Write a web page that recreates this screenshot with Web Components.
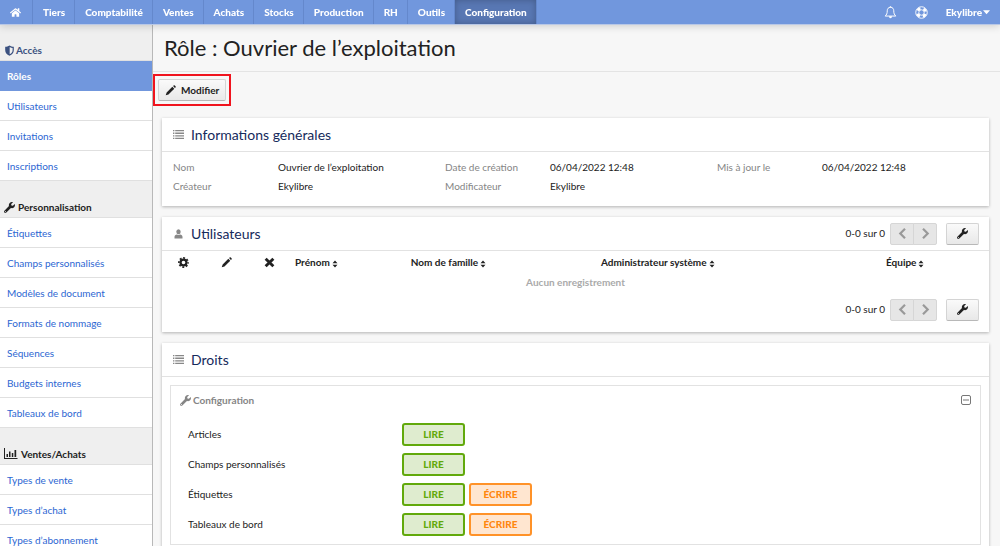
<!DOCTYPE html>
<html lang="fr">
<head>
<meta charset="utf-8">
<meta name="viewport" content="width=device-width, initial-scale=1">
<title>Rôle : Ouvrier de l’exploitation</title>
<style>
    body {
        margin: 0;
        font-family: Lato, "Open Sans", sans-serif;
        font-size: 10px;
        line-height: 19px;
        color: #222;
        background: #f7f7f7;
    }
</style>
</head>
<body>
<ek-app></ek-app>

<script>
const ICONS = {
    home: ['0 0 576 512', '<path d="M280.37 148.26L96 300.11V464a16 16 0 0 0 16 16l112.06-.29a16 16 0 0 0 15.92-16V368a16 16 0 0 1 16-16h64a16 16 0 0 1 16 16v95.64a16 16 0 0 0 16 16.05L464 480a16 16 0 0 0 16-16V300L295.67 148.26a12.19 12.19 0 0 0-15.3 0zM571.6 251.47L488 182.56V44.05a12 12 0 0 0-12-12h-56a12 12 0 0 0-12 12v72.61L318.47 43a48 48 0 0 0-61 0L4.34 251.47a12 12 0 0 0-1.6 16.9l25.5 31A12 12 0 0 0 45.15 301l235.22-193.74a12.19 12.19 0 0 1 15.3 0L530.9 301a12 12 0 0 0 16.9-1.6l25.5-31a12 12 0 0 0-1.7-16.93z"/>'],
    wrench: ['0 0 512 512', '<path d="M507.73 109.1c-2.24-9.03-13.54-12.09-20.12-5.51l-74.36 74.36-67.88-11.31-11.31-67.88 74.36-74.36c6.62-6.62 3.43-17.9-5.66-20.16-47.38-11.74-99.55.91-136.58 37.93-39.64 39.64-50.55 97.1-34.05 147.2L18.74 402.76c-24.99 24.99-24.99 65.51 0 90.5 24.99 24.99 65.51 24.99 90.5 0l213.21-213.21c50.12 16.71 107.47 5.68 147.37-34.22 37.07-37.07 49.7-89.32 37.91-136.73zM64 472c-13.25 0-24-10.75-24-24 0-13.26 10.75-24 24-24s24 10.74 24 24c0 13.25-10.75 24-24 24z"/>'],
    pencil: ['0 0 12 12', '<path d="M8 1.900l2.100 2.100-6.300 6.300-3 1 1-3zM8.800 1.200l.6-.6q.7-.6 1.300 0l.8.8q.5.6 0 1.200l-.7.7z"/>'],
    bell: ['0 0 12 12', '<path d="M6 1.200c-2 0-3 1.400-3 3.200 0 2.600-.6 3.600-1.900 4.900h9.800C9.600 8 9 7 9 4.400 9 2.600 8 1.200 6 1.200z" fill="none" stroke="currentColor" stroke-width=".9" stroke-linejoin="round"/><path d="M5.400 .3h1.200v1H5.400zM4.600 9.500h2.800a1.400 1.700 0 0 1-2.800 0z"/>'],
    ring: ['0 0 14 14', '<g fill="none" stroke="currentColor"><circle cx="7" cy="7" r="6.200"/><circle cx="7" cy="7" r="2.900"/><circle cx="7" cy="7" r="4.500" stroke-width="2.800" stroke-dasharray="3.600 3.470" stroke-dashoffset="-1.700"/></g>'],
    caret: ['0 0 8 5', '<path d="M0 0h8L4 4.500z"/>'],
    shield: ['0 0 12 12', '<path fill-rule="evenodd" d="M6 .5c1.500 1 3 1.400 4.700 1.400v3.600c0 3-1.700 4.900-4.700 6.200-3-1.300-4.700-3.200-4.700-6.200V1.900C3 1.900 4.500 1.500 6 .5zm.2 1.700v7.900c2.100-1 3.200-2.400 3.200-4.600V3.200C8.200 3.100 7.200 2.800 6.200 2.200z"/>'],
    chart: ['0 0 14 12', '<path d="M0 0h1v10h12.500v1H0zM2.500 6h1.500v3H2.500zM5 3.500h1.500V9H5zM7.800 5h1.500v4H7.800zM10.500 2h1.700v7h-1.700z"/>'],
    list: ['0 0 11 10', '<path d="M0 0h1.400v1.300H0zM0 2.600h1.400v1.300H0zM0 5.200h1.400v1.300H0zM0 7.800h1.400v1.300H0zM2.200 0H11v1.300H2.200zM2.200 2.600H11v1.300H2.200zM2.200 5.200H11v1.300H2.200zM2.200 7.800H11v1.300H2.200z"/>'],
    user: ['0 0 10 10', '<ellipse cx="5" cy="2.700" rx="2.200" ry="2.500"/><path d="M1 9.500V8c0-1.600 1-2.500 2.500-2.500.9.600 2.100.6 3 0C8 5.500 9 6.400 9 8v1.500z"/>'],
    gear: ['0 0 12 12', '<circle cx="6" cy="6" r="3.200" fill="none" stroke="currentColor" stroke-width="2.400"/><circle cx="6" cy="6" r="5" fill="none" stroke="currentColor" stroke-width="1.800" stroke-dasharray="2.100 1.827" stroke-dashoffset="1"/>'],
    times: ['0 0 10 10', '<path d="M1.500 1.500l7 7M8.500 1.500l-7 7" stroke="currentColor" stroke-width="2.600"/>'],
    prev: ['0 0 11 11', '<path d="M8 .8L3.300 5.500 8 10.200" fill="none" stroke="currentColor" stroke-width="2.200"/>'],
    next: ['0 0 11 11', '<path d="M3 .8l4.700 4.700L3 10.200" fill="none" stroke="currentColor" stroke-width="2.200"/>'],
    sort: ['0 0 6 8', '<path d="M0.500 3.300L3 .4l2.500 2.900zM.5 4.700h5L3 7.600z"/>'],
    minus: ['0 0 11 11', '<rect x=".5" y=".5" width="9" height="9" rx="1.500" fill="none" stroke="currentColor"/><path d="M2 4.500h6v1H2z"/>']
};

class EkIcon extends HTMLElement {
    connectedCallback() {
        const [box, shape] = ICONS[this.getAttribute('name')];
        this.attachShadow({ mode: 'open' });
        this.shadowRoot.innerHTML = `
            <style>
                :host { display: inline-flex; flex: none; width: 11px; height: 11px; }
                svg { width: 100%; height: 100%; fill: currentColor; }
            </style>
            <svg viewBox="${box}" aria-hidden="true">${shape}</svg>
        `;
    }
}

class EkNavbar extends HTMLElement {
    connectedCallback() {
        const items = ['Tiers', 'Comptabilité', 'Ventes', 'Achats', 'Stocks', 'Production', 'RH', 'Outils', 'Configuration'];
        this.attachShadow({ mode: 'open' });
        this.shadowRoot.innerHTML = `
            <style>
                :host {
                    display: flex;
                    justify-content: space-between;
                    height: 24px;
                    position: relative;
                    z-index: 2;
                    background: #7197dd;
                    border-bottom: 1px solid #b9c8e6;
                    box-shadow: 0 1px 8px rgba(0, 0, 0, 0.18);
                    font-weight: 900;
                }
                nav, .tools { display: flex; }
                a {
                    display: flex;
                    align-items: center;
                    box-sizing: border-box;
                    padding: 0 9px 0 10px;
                    color: white;
                    text-decoration: none;
                    border-right: 1px solid #6488cc;
                }
                a.home { padding: 0 11px 0 10px; }
                a.active {
                    background: #5877b3;
                    box-shadow: inset 0 0 6px rgba(0, 0, 0, 0.25);
                }
                .tools { align-items: center; gap: 18px; padding-right: 10px; }
                .tools a { padding: 0; border: 0; gap: 1px; }
                .tools ek-icon { width: 13px; height: 13px; }
                .tools .caret { width: 7px; height: 5px; }
            </style>
            <nav>
                <a href="#" class="home" aria-label="Accueil"><ek-icon name="home"></ek-icon></a>
                ${items.map(i => `<a href="#" class="${i === 'Configuration' ? 'active' : ''}">${i}</a>`).join('')}
            </nav>
            <div class="tools">
                <a href="#" aria-label="Notifications"><ek-icon name="bell"></ek-icon></a>
                <a href="#" aria-label="Aide"><ek-icon name="ring"></ek-icon></a>
                <a href="#">Ekylibre<ek-icon class="caret" name="caret"></ek-icon></a>
            </div>
        `;
    }
}

class EkSideGroup extends HTMLElement {
    connectedCallback() {
        this.attachShadow({ mode: 'open' });
        this.shadowRoot.innerHTML = `
            <style>
                :host { display: block; }
                h2 {
                    display: flex;
                    align-items: center;
                    gap: 3px;
                    box-sizing: border-box;
                    height: 37px;
                    margin: 0;
                    padding: 16px 4px 0;
                    font-size: 10px;
                    background: #efefef;
                    border-bottom: 1px solid #e0e0e0;
                }
                :host([current]) h2 { height: 36px; color: #3b5180; gap: 1px; }
                ::slotted(a) {
                    display: block;
                    box-sizing: border-box;
                    height: 30px;
                    padding: 6px 7px 4px;
                    color: #2b66d2;
                    background: white;
                    border-bottom: 1px solid #e0e0e0;
                    text-decoration: none;
                }
                ::slotted(a.active) {
                    color: white;
                    font-weight: bold;
                    background: #7197dd;
                    border-color: #7197dd;
                }
                .chart { width: 14px; height: 12px; }
            </style>
            <h2><ek-icon class="${this.getAttribute('icon')}" name="${this.getAttribute('icon')}"></ek-icon>${this.getAttribute('label')}</h2>
            <slot></slot>
        `;
    }
}

class EkPanel extends HTMLElement {
    connectedCallback() {
        this.attachShadow({ mode: 'open' });
        this.shadowRoot.innerHTML = `
            <style>
                :host {
                    display: block;
                    background: white;
                    box-shadow: 0 1px 3px rgba(0, 0, 0, 0.28);
                }
                header {
                    display: flex;
                    align-items: center;
                    min-height: 33px;
                    padding: 0 10px 0 11px;
                    border-bottom: 1px solid #e2e2e2;
                }
                header ek-icon { color: #888; margin-right: 7px; height: 10px; }
                h2 {
                    flex: 1;
                    margin: 0;
                    font-size: 14px;
                    font-weight: normal;
                    color: #152a5c;
                }
            </style>
            <header>
                <ek-icon name="${this.getAttribute('icon')}"></ek-icon>
                <h2>${this.getAttribute('label')}</h2>
                <slot name="tools"></slot>
            </header>
            <slot></slot>
        `;
    }
}

class EkPager extends HTMLElement {
    connectedCallback() {
        this.attachShadow({ mode: 'open' });
        this.shadowRoot.innerHTML = `
            <style>
                :host { display: flex; align-items: center; justify-content: flex-end; height: 33px; }
                .group { display: flex; margin: 0 9px 0 5px; }
                button {
                    display: flex;
                    align-items: center;
                    justify-content: center;
                    box-sizing: border-box;
                    width: 33px;
                    height: 22px;
                    padding: 0;
                    color: #222;
                    background: linear-gradient(#fafafa, #e8e8e8);
                    border: 1px solid #d4d4d4;
                    border-bottom-color: #b8b8b8;
                    border-radius: 2px;
                }
                .group button {
                    width: 24px;
                    color: #999;
                    background: #e6e6e6;
                    border-color: #d6d6d6;
                }
                .group button:first-child { border-radius: 2px 0 0 2px; }
                .group button:last-child { margin-left: -1px; border-radius: 0 2px 2px 0; }
            </style>
            <span>0-0 sur 0</span>
            <div class="group">
                <button type="button" disabled aria-label="Précédent"><ek-icon name="prev"></ek-icon></button>
                <button type="button" disabled aria-label="Suivant"><ek-icon name="next"></ek-icon></button>
            </div>
            <button type="button" aria-label="Options"><ek-icon name="wrench"></ek-icon></button>
        `;
    }
}

class EkInfos extends HTMLElement {
    connectedCallback() {
        const infos = [
            ['Nom', 'Ouvrier de l’exploitation'],
            ['Date de création', '06/04/2022 12:48'],
            ['Mis à jour le', '06/04/2022 12:48'],
            ['Créateur', 'Ekylibre'],
            ['Modificateur', 'Ekylibre']
        ];
        this.attachShadow({ mode: 'open' });
        this.shadowRoot.innerHTML = `
            <style>
                :host { display: block; padding: 6px 0 10px 11px; }
                dl { display: grid; grid-template-columns: repeat(3, 1fr); margin: 0; }
                div { display: flex; }
                dt { width: 105px; color: #858585; }
                dd { margin: 0; }
            </style>
            <dl>${infos.map(([k, v]) => `<div><dt>${k}</dt><dd>${v}</dd></div>`).join('')}</dl>
        `;
    }
}

class EkUserList extends HTMLElement {
    connectedCallback() {
        const columns = ['Prénom', 'Nom de famille', 'Administrateur système', 'Équipe'];
        this.attachShadow({ mode: 'open' });
        this.shadowRoot.innerHTML = `
            <style>
                :host { display: block; padding-bottom: 6px; }
                table { width: 100%; table-layout: fixed; border-collapse: collapse; }
                th { height: 21px; padding: 0 4px; text-align: left; line-height: 14px; }
                th.act { padding: 0; text-align: center; }
                th.act ek-icon { vertical-align: middle; }
                th ek-icon.sort { width: 6px; height: 8px; margin-left: 2px; vertical-align: -2px; }
                .act { width: 43px; }
                .c0 { width: 14%; }
                .c1 { width: 23%; }
                .c3 { width: 107px; }
                td { height: 21px; padding: 0; text-align: center; font-weight: bold; color: #aaa; }
                ek-pager { padding-right: 10px; }
            </style>
            <table>
                <colgroup><col class="act"><col class="act"><col class="act"><col class="c0"><col class="c1"><col><col class="c3"></colgroup>
                <thead>
                    <tr>
                        <th class="act"><ek-icon name="gear"></ek-icon></th>
                        <th class="act"><ek-icon name="pencil"></ek-icon></th>
                        <th class="act"><ek-icon name="times"></ek-icon></th>
                        ${columns.map(c => `<th>${c}<ek-icon class="sort" name="sort"></ek-icon></th>`).join('')}
                    </tr>
                </thead>
                <tbody><tr><td colspan="7">Aucun enregistrement</td></tr></tbody>
            </table>
            <ek-pager></ek-pager>
        `;
    }
}

class EkRights extends HTMLElement {
    connectedCallback() {
        const rights = [
            ['Articles', false],
            ['Champs personnalisés', false],
            ['Étiquettes', true],
            ['Tableaux de bord', true]
        ];
        this.attachShadow({ mode: 'open' });
        this.shadowRoot.innerHTML = `
            <style>
                :host { display: block; padding: 8px 8px 20px; }
                section { border: 1px solid #e2e2e2; padding-bottom: 5px; }
                header {
                    display: flex;
                    align-items: center;
                    justify-content: space-between;
                    height: 28px;
                    padding: 0 8px 0 9px;
                    color: #858585;
                }
                h3 { display: flex; align-items: center; gap: 2px; margin: 0; font-size: 10px; }
                header button { display: flex; padding: 0; border: 0; color: #777; background: none; }
                ul { margin: 0; padding: 5px 0 0 17px; list-style: none; }
                li { display: flex; align-items: center; height: 30px; gap: 4px; }
                li span { width: 210px; }
                li button {
                    box-sizing: border-box;
                    width: 63px;
                    height: 23px;
                    padding: 0;
                    font: 900 10px/19px Lato, sans-serif;
                    color: #62a90c;
                    background: #dfeccf;
                    border: 2px solid #62a90c;
                    border-radius: 3px;
                }
                li button.write { color: #ff870f; background: #ffe6d0; border-color: #ff9228; }
            </style>
            <section>
                <header>
                    <h3><ek-icon name="wrench"></ek-icon>Configuration</h3>
                    <button type="button" aria-label="Replier"><ek-icon name="minus"></ek-icon></button>
                </header>
                <ul>
                    ${rights.map(([name, write]) => `
                        <li><span>${name}</span><button type="button">LIRE</button>${write ? '<button type="button" class="write">ÉCRIRE</button>' : ''}</li>
                    `).join('')}
                </ul>
            </section>
        `;
    }
}

class EkApp extends HTMLElement {
    connectedCallback() {
        this.attachShadow({ mode: 'open' });
        this.shadowRoot.innerHTML = `
            <style>
                :host { display: flex; flex-direction: column; height: 100vh; }
                .body { flex: 1; min-height: 0; display: flex; }
                aside, main { overflow-y: auto; scrollbar-width: none; }
                aside {
                    flex: none;
                    width: 152px;
                    background: #efefef;
                    border-right: 1px solid #b8b8b8;
                }
                main { flex: 1; min-width: 0; }
                h1 {
                    margin: 0;
                    padding: 8px 11px;
                    font-size: 22px;
                    font-weight: normal;
                    line-height: 30px;
                    border-bottom: 1px solid #e4e4e4;
                }
                .toolbar { display: flex; padding: 2px 0 0; }
                .highlight { padding: 3px; border: 2px solid #f0141e; }
                .highlight button {
                    display: flex;
                    align-items: center;
                    gap: 5px;
                    box-sizing: border-box;
                    height: 22px;
                    padding: 0 6px;
                    font: bold 10px Lato, sans-serif;
                    color: #222;
                    background: linear-gradient(#fafafa, #e9e9e9);
                    border: 1px solid #d4d4d4;
                    border-bottom-color: #b8b8b8;
                    border-radius: 2px;
                }
                .panels { display: flex; flex-direction: column; gap: 11px; padding: 12px 11px 20px 9px; }
            </style>
            <ek-navbar></ek-navbar>
            <div class="body">
                <aside>
                    <ek-side-group icon="shield" label="Accès" current>
                        <a href="#" class="active">Rôles</a>
                        <a href="#">Utilisateurs</a>
                        <a href="#">Invitations</a>
                        <a href="#">Inscriptions</a>
                    </ek-side-group>
                    <ek-side-group icon="wrench" label="Personnalisation">
                        <a href="#">Étiquettes</a>
                        <a href="#">Champs personnalisés</a>
                        <a href="#">Modèles de document</a>
                        <a href="#">Formats de nommage</a>
                        <a href="#">Séquences</a>
                        <a href="#">Budgets internes</a>
                        <a href="#">Tableaux de bord</a>
                    </ek-side-group>
                    <ek-side-group icon="chart" label="Ventes/Achats">
                        <a href="#">Types de vente</a>
                        <a href="#">Types d’achat</a>
                        <a href="#">Types d’abonnement</a>
                    </ek-side-group>
                </aside>
                <main>
                    <h1>Rôle : Ouvrier de l’exploitation</h1>
                    <div class="toolbar">
                        <div class="highlight">
                            <button type="button"><ek-icon name="pencil"></ek-icon>Modifier</button>
                        </div>
                    </div>
                    <div class="panels">
                        <ek-panel icon="list" label="Informations générales">
                            <ek-infos></ek-infos>
                        </ek-panel>
                        <ek-panel icon="user" label="Utilisateurs">
                            <ek-pager slot="tools"></ek-pager>
                            <ek-user-list></ek-user-list>
                        </ek-panel>
                        <ek-panel icon="list" label="Droits">
                            <ek-rights></ek-rights>
                        </ek-panel>
                    </div>
                </main>
            </div>
        `;
    }
}

customElements.define('ek-icon', EkIcon);
customElements.define('ek-navbar', EkNavbar);
customElements.define('ek-side-group', EkSideGroup);
customElements.define('ek-panel', EkPanel);
customElements.define('ek-pager', EkPager);
customElements.define('ek-infos', EkInfos);
customElements.define('ek-user-list', EkUserList);
customElements.define('ek-rights', EkRights);
customElements.define('ek-app', EkApp);
</script>
</body>
</html>
